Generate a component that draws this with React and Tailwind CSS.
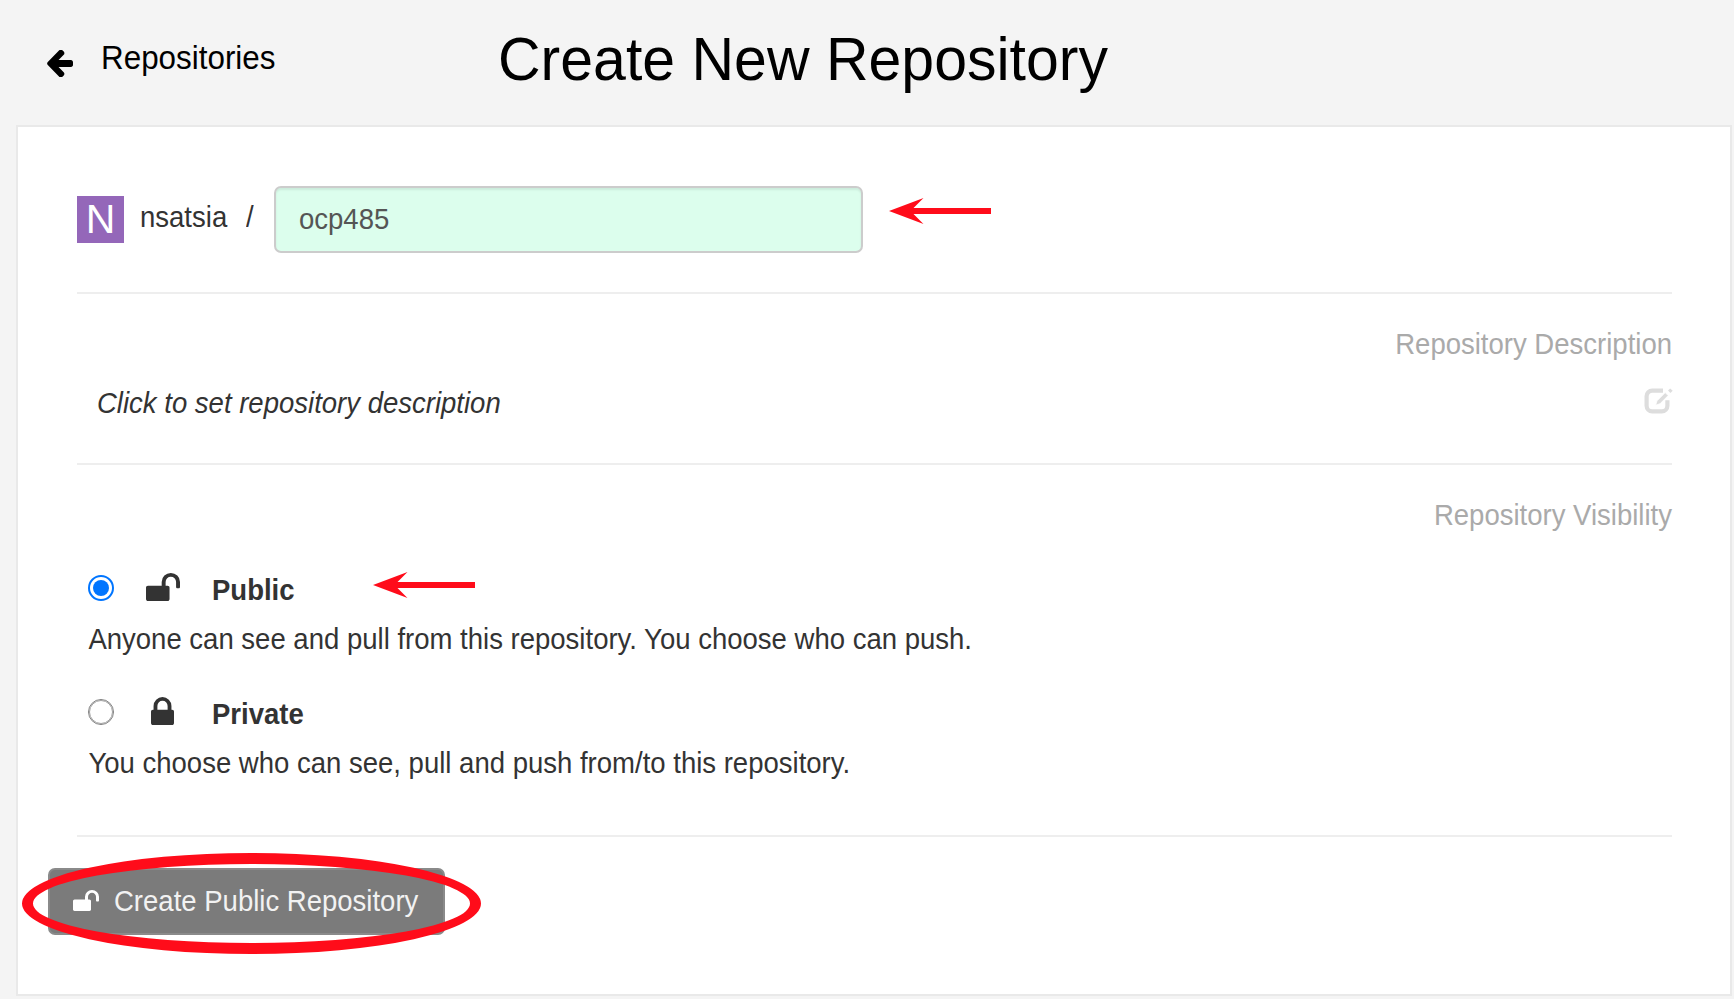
const UNLOCK =
  "M1664 576v256q0 26-19 45t-45 19h-64q-26 0-45-19t-19-45v-256q0-106-75-181t-181-75-181 75-75 181v192h96q40 0 68 28t28 68v576q0 40-28 68t-68 28h-960q-40 0-68-28t-28-68v-576q0-40 28-68t68-28h672v-192q0-185 131.5-316.5t316.5-131.5 316.5 131.5 131.5 316.5z";
const LOCK =
  "M320 768h512v-192q0-106-75-181t-181-75-181 75-75 181v192zm832 96v576q0 40-28 68t-68 28h-960q-40 0-68-28t-28-68v-576q0-40 28-68t68-28h32v-192q0-184 132-316t316-132 316 132 132 316v192h32q40 0 68 28t28 68z";
const ARROW_LEFT =
  "M1536 640v128q0 53-32.5 90.5t-84.5 37.5h-704l293 294q38 36 38 90t-38 90l-75 76q-37 37-90 37-52 0-91-37l-651-652q-37-37-37-90 0-52 37-91l651-650q38-38 91-38 52 0 90 38l75 74q38 38 38 91t-38 91l-293 293h704q52 0 84.5 37.5t32.5 90.5z";

function Icon({ d, viewBox, className }) {
  return (
    <svg viewBox={viewBox} className={className} fill="currentColor" preserveAspectRatio="none" aria-hidden="true">
      <path d={d} />
    </svg>
  );
}

// Slightly tall lettering, stretched upward from the baseline.
function Tall({ children }) {
  return <span className="inline-block origin-[50%_74%] scale-y-[1.05]">{children}</span>;
}

function EditIcon() {
  return (
    <svg viewBox="0 0 29 27" className="h-[27px] w-[29px] text-[#dddddd]" fill="none" stroke="currentColor" aria-hidden="true">
      <path d="M19 2.6H8.2a5.6 5.6 0 0 0-5.6 5.6v9.6a5.6 5.6 0 0 0 5.6 5.6h9.6a5.6 5.6 0 0 0 5.6-5.6v-5.6" strokeWidth="4.2" />
      <path d="M11.6 17.2l1.4-4.4 8.2-8.2 3 3-8.2 8.2z" fill="currentColor" stroke="#ffffff" strokeWidth="0.8" />
      <path d="M24 2.4l2.2-1.9 2.5 2.2-2.3 2.2z" fill="currentColor" stroke="none" />
    </svg>
  );
}

function Radio({ checked }) {
  return checked ? (
    <span className="flex h-[26px] w-[26px] items-center justify-center rounded-full border-2 border-[#0075ff]">
      <span className="h-4 w-4 rounded-full bg-[#0075ff]" />
    </span>
  ) : (
    <span className="block h-[26px] w-[26px] rounded-full border-[1.5px] border-[#808080] bg-white outline-[0.5px] -outline-offset-2 outline-[#a0a0a0]" />
  );
}

function Option({ checked, icon, title, children }) {
  return (
    <div className="h-[124px] pl-[11.4px]">
      <div className="flex h-10">
        <div className="w-[57.6px] pt-1">
          <Radio checked={checked} />
        </div>
        <div className="flex w-[34px] justify-center pt-[2px]">{icon}</div>
        <div className="ml-[32px] font-bold">
          <Tall>{title}</Tall>
        </div>
      </div>
      <div className="mt-[9px]">
        <Tall>{children}</Tall>
      </div>
    </div>
  );
}

function RedArrow({ className }) {
  return (
    <svg viewBox="0 0 102 26" className={className} fill="#ff0c1a" aria-hidden="true">
      <path d="M0 13L34.5 0L24.5 10H102V16H24.5L34.5 26Z" />
    </svg>
  );
}

export default function App() {
  return (
    <div className="relative h-[999px] w-[1734px] overflow-hidden bg-[#f4f4f4] font-['Liberation_Sans',Arial,sans-serif] text-[27.53px] leading-10 whitespace-nowrap text-[#333333]">
      <header className="flex h-[125px] text-black">
        <a className="flex w-[498px] items-start pt-[39px] pl-[46px] text-[31.4px]">
          <Icon d={ARROW_LEFT} viewBox="0 -54 1536 1515" className="mt-[11px] mr-7 h-[27px] w-[27px]" />
          <Tall>Repositories</Tall>
        </a>
        <h1 className="pt-[25px] text-[59px] leading-[70px]">
          <Tall>Create New Repository</Tall>
        </h1>
      </header>

      <main className="ml-4 h-[871px] w-[1716px] border-2 border-[#e9e9e9] bg-white pt-[59px] pr-[58px] pl-[59px]">
        <div className="flex h-[106px]">
          <div className="mt-[10px] flex h-[47px] w-[47px] items-center justify-center bg-[#9467b9] pb-px text-[41px] text-white">N</div>
          <span className="mt-3 ml-4 w-[106px]">
            <Tall>nsatsia</Tall>
          </span>
          <span className="mt-3 w-[28px]">
            <Tall>/</Tall>
          </span>
          <div className="h-[67px] w-[589px] rounded-[7px] border-2 border-[#cccccc] bg-[#dcfeed] pt-3 pl-[23px] text-[#555555] shadow-[inset_0_2px_2px_rgba(0,0,0,0.075)]">
            <Tall>ocp485</Tall>
          </div>
        </div>

        <section className="h-[171px] border-t-2 border-[#eeeeee] pt-[31px]">
          <div className="text-right text-[#aaaaaa]">
            <Tall>Repository Description</Tall>
          </div>
          <div className="flex justify-between pt-[19px] pl-5">
            <em>
              <Tall>Click to set repository description</Tall>
            </em>
            <span className="-mr-px pt-1">
              <EditIcon />
            </span>
          </div>
        </section>

        <section className="h-[372px] border-t-2 border-[#eeeeee] pt-[31px]">
          <div className="text-right text-[#aaaaaa]">
            <Tall>Repository Visibility</Tall>
          </div>
          <div className="pt-[35px]">
            <Option
              checked
              title="Public"
              icon={<Icon d={UNLOCK} viewBox="0 128 1664 1408" className="h-[28px] w-[34px]" />}
            >
              Anyone can see and pull from this repository. You choose who can push.
            </Option>
            <Option
              title="Private"
              icon={<Icon d={LOCK} viewBox="0 128 1152 1408" className="h-[28px] w-[23px]" />}
            >
              You choose who can see, pull and push from/to this repository.
            </Option>
          </div>
        </section>

        <div className="border-t-2 border-[#eeeeee] pt-[31px]">
          <button className="-ml-[29px] flex h-[67px] w-[397px] items-start rounded-[7px] border-2 border-[#8a8a8a] bg-[#7b7b7b] pt-3 pl-[23px] text-[#f2f2f2]">
            <Icon d={UNLOCK} viewBox="0 128 1664 1408" className="mt-2 mr-[15px] h-[21px] w-[26px] text-white" />
            <Tall>Create Public Repository</Tall>
          </button>
        </div>
      </main>

      <RedArrow className="absolute top-[198px] left-[889px] h-[26px] w-[102px]" />
      <RedArrow className="absolute top-[572px] left-[373px] h-[26px] w-[102px]" />
      <div className="absolute top-[853px] left-[22px] h-[101px] w-[459px] rounded-[50%] border-[11px] border-[#ff0c1a]" />
    </div>
  );
}
